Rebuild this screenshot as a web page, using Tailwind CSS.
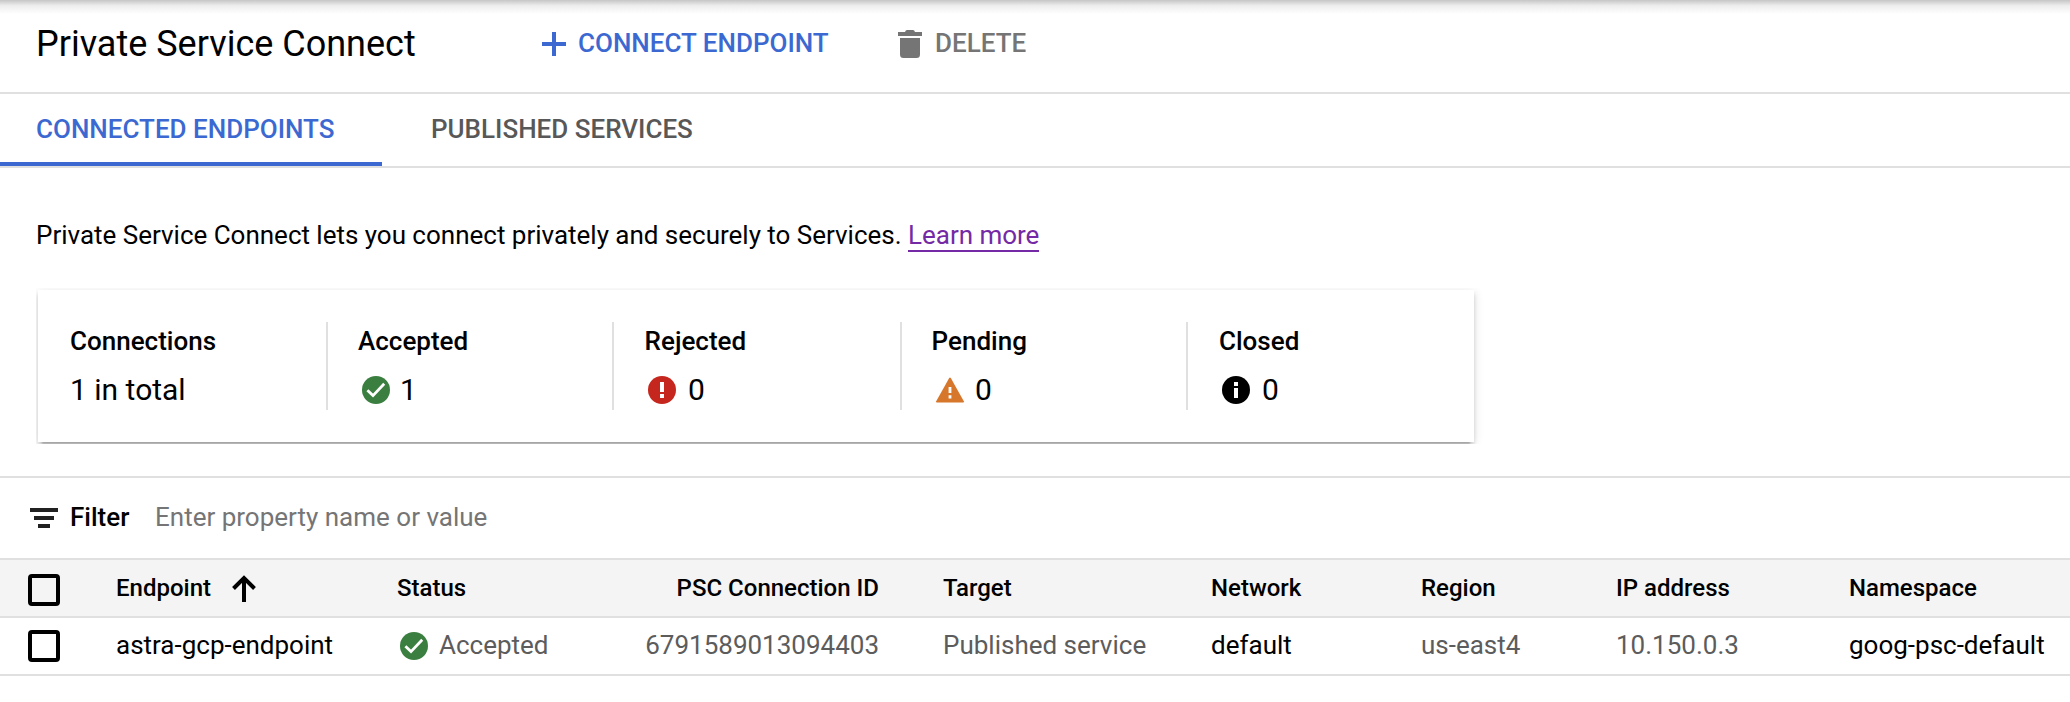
<!DOCTYPE html>
<html lang="en">
<head>
<meta charset="utf-8">
<title>Private Service Connect</title>
<script src="https://cdn.jsdelivr.net/npm/@tailwindcss/browser@4"></script>
</head>
<body class="h-[702px] w-[2070px] overflow-hidden bg-white font-['Roboto','Liberation_Sans',sans-serif] text-[26px] text-black">
<div class="relative">
  <div class="pointer-events-none absolute inset-x-0 top-0 h-[14px] bg-linear-to-b from-[#c6c6c6] via-[#ededed] via-40% to-white"></div>

  <header class="flex h-[94px] items-start border-b-2 border-[#e0e0e0] pl-9">
    <h1 class="w-[500px] text-[36px] leading-[88px]">Private Service Connect</h1>
    <button class="flex h-[88px] w-[356px] items-center pl-1.5 font-medium text-[#3c69d1]">
      <svg class="mr-3 size-6" viewBox="0 0 24 24" fill="currentColor"><path d="M10 0h4v10h10v4H14v10h-4V14H0v-4h10z"/></svg>
      <span class="leading-[86px] -mt-0.5">CONNECT ENDPOINT</span>
    </button>
    <button class="flex h-[88px] items-center pl-1.5 font-medium text-[#757575]">
      <svg class="mr-[13px] h-7 w-6" viewBox="0 0 24 28" fill="currentColor"><path d="M0 2h7q.6-2 2-2h6q1.400 0 2 2h7v4H0zM2 8h20v16.500q0 3.500-3.500 3.500h-13Q2 28 2 24.500z"/></svg>
      <span class="leading-[86px] -mt-0.5">DELETE</span>
    </button>
  </header>

  <nav class="flex h-[74px] border-b-2 border-[#e0e0e0] font-medium leading-[70px]">
    <div class="h-[72px] w-[382px] border-b-4 border-[#3c69d1] pl-9 text-[#3c69d1]">CONNECTED ENDPOINTS</div>
    <div class="pl-[49px] text-[#585858]">PUBLISHED SERVICES</div>
  </nav>

  <p class="h-[120px] pl-9 pt-[47px] leading-10 [word-spacing:-0.1px]">Private Service Connect lets you connect privately and securely to Services. <a class="inline-block h-[37px] border-b-2 border-[#7429a5] text-[#7429a5]">Learn more</a></p>

  <section class="ml-9 h-[156px] w-[1460px] overflow-hidden pl-0.5 pt-0.5">
    <div class="grid h-[152px] w-[1436px] grid-cols-[288px_286px_288px_286px_1fr] bg-white py-8 shadow-[0_4px_4px_0_rgba(0,0,0,0.14),0_6px_2px_-4px_rgba(0,0,0,0.2),0_2px_10px_0_rgba(0,0,0,0.12)]">
      <div class="pl-8">
        <div class="font-medium leading-[38px]">Connections</div>
        <div class="mt-3 text-[30px] leading-9">1 in total</div>
      </div>
      <div class="border-l-2 border-[#e0e0e0] pl-[30px]">
        <div class="font-medium leading-[38px]">Accepted</div>
        <div class="mt-3 flex items-center gap-1.5 text-[30px] leading-9">
          <svg class="size-9" viewBox="0 0 18 18"><circle cx="9" cy="9" r="7" fill="#3b7f40"/><path d="M4.700 9.100 7.500 11.800 13.100 5.900" fill="none" stroke="#fff" stroke-width="1.400"/></svg>1</div>
      </div>
      <div class="border-l-2 border-[#e0e0e0] pl-[30.600px]">
        <div class="font-medium leading-[38px]">Rejected</div>
        <div class="-ml-[0.600px] mt-3 flex items-center gap-2 text-[30px] leading-9">
          <svg class="size-9" viewBox="0 0 18 18"><circle cx="9" cy="9" r="7" fill="#c5271e"/><path d="M8 5h2v5H8zM8 11h2v2H8z" fill="#fff"/></svg>0</div>
      </div>
      <div class="border-l-2 border-[#e0e0e0] pl-[29.600px]">
        <div class="font-medium leading-[38px]">Pending</div>
        <div class="ml-[0.400px] mt-3 flex items-center gap-[7px] text-[30px] leading-9">
          <svg class="size-9" viewBox="0 0 18 18"><path d="M8.600 3q.4-.5.800 0l6.500 11.600q.3.700-.4.700h-13q-.7 0-.4-.7z" fill="#d6772c"/><path d="M8.300 7.500h1.400v3H8.300zM8.300 11.600h1.400v1.700H8.300z" fill="#fff"/></svg>0</div>
      </div>
      <div class="border-l-2 border-[#e0e0e0] pl-[31px]">
        <div class="font-medium leading-[38px]">Closed</div>
        <div class="-ml-px mt-3 flex items-center gap-2 text-[30px] leading-9">
          <svg class="size-9" viewBox="0 0 18 18"><circle cx="9" cy="9" r="7"/><path d="M8 5h2v2H8zM8 8h2v5H8z" fill="#fff"/></svg>0</div>
      </div>
    </div>
  </section>

  <div class="mt-8 flex h-[84px] items-center border-y-2 border-[#e0e0e0] pl-[30px] leading-[38px]">
    <svg class="h-5 w-7" viewBox="0 0 28 20" fill="#212121"><path d="M0 0h28v4H0zM4 8h20v4H4zM8 16h12v4H8z"/></svg>
    <span class="-mt-0.5 ml-3 w-[85px] font-medium">Filter</span>
    <span class="-mt-0.5 text-[#757575]">Enter property name or value</span>
  </div>

  <table class="w-full table-fixed border-separate border-spacing-0 text-left">
    <colgroup><col class="w-[116px]"><col class="w-[281px]"><col class="w-[203px]"><col class="w-[279px]"><col class="w-[332px]"><col class="w-[210px]"><col class="w-[195px]"><col class="w-[233px]"><col></colgroup>
    <thead>
      <tr class="h-[58px] bg-[#f4f4f4] text-[24px] leading-[56px] [&>th]:border-b-2 [&>th]:border-[#e0e0e0]">
        <th class="p-0 pl-7"><div class="mt-1 size-8 rounded-[4px] border-4 border-black"></div></th>
        <th class="p-0 font-medium"><div class="flex h-14 items-center">Endpoint<svg class="ml-[21px] h-[27px] w-6" viewBox="0 0 24 27" fill="none" stroke="#000" stroke-width="4"><path d="M12 27V3M1.500 13.500 12 3l10.500 10.500"/></svg></div></th>
        <th class="p-0 font-medium">Status</th>
        <th class="p-0 text-right font-medium">PSC Connection ID</th>
        <th class="p-0 pl-16 font-medium">Target</th>
        <th class="p-0 font-medium">Network</th>
        <th class="p-0 font-medium">Region</th>
        <th class="p-0 font-medium">IP address</th>
        <th class="p-0 font-medium">Namespace</th>
      </tr>
    </thead>
    <tbody>
      <tr class="h-[58px] leading-[54px] text-[#5c5c5c] [&>td]:border-b-2 [&>td]:border-[#e0e0e0]">
        <td class="p-0 pl-7"><div class="size-8 rounded-[4px] border-4 border-black"></div></td>
        <td class="p-0 pb-0.5 text-black">astra-gcp-endpoint</td>
        <td class="p-0"><div class="flex h-14 items-center"><svg class="-ml-px mr-[7px] size-9" viewBox="0 0 18 18"><circle cx="9" cy="9" r="7" fill="#3b7f40"/><path d="M4.700 9.100 7.500 11.800 13.100 5.900" fill="none" stroke="#fff" stroke-width="1.400"/></svg><span class="pb-0.5">Accepted</span></div></td>
        <td class="p-0 pb-0.5 text-right">6791589013094403</td>
        <td class="p-0 pb-0.5 pl-16">Published service</td>
        <td class="p-0 pb-0.5 text-black">default</td>
        <td class="p-0 pb-0.5">us-east4</td>
        <td class="p-0 pb-0.5">10.150.0.3</td>
        <td class="p-0 pb-0.5 text-black">goog-psc-default</td>
      </tr>
    </tbody>
  </table>
</div>
</body>
</html>
